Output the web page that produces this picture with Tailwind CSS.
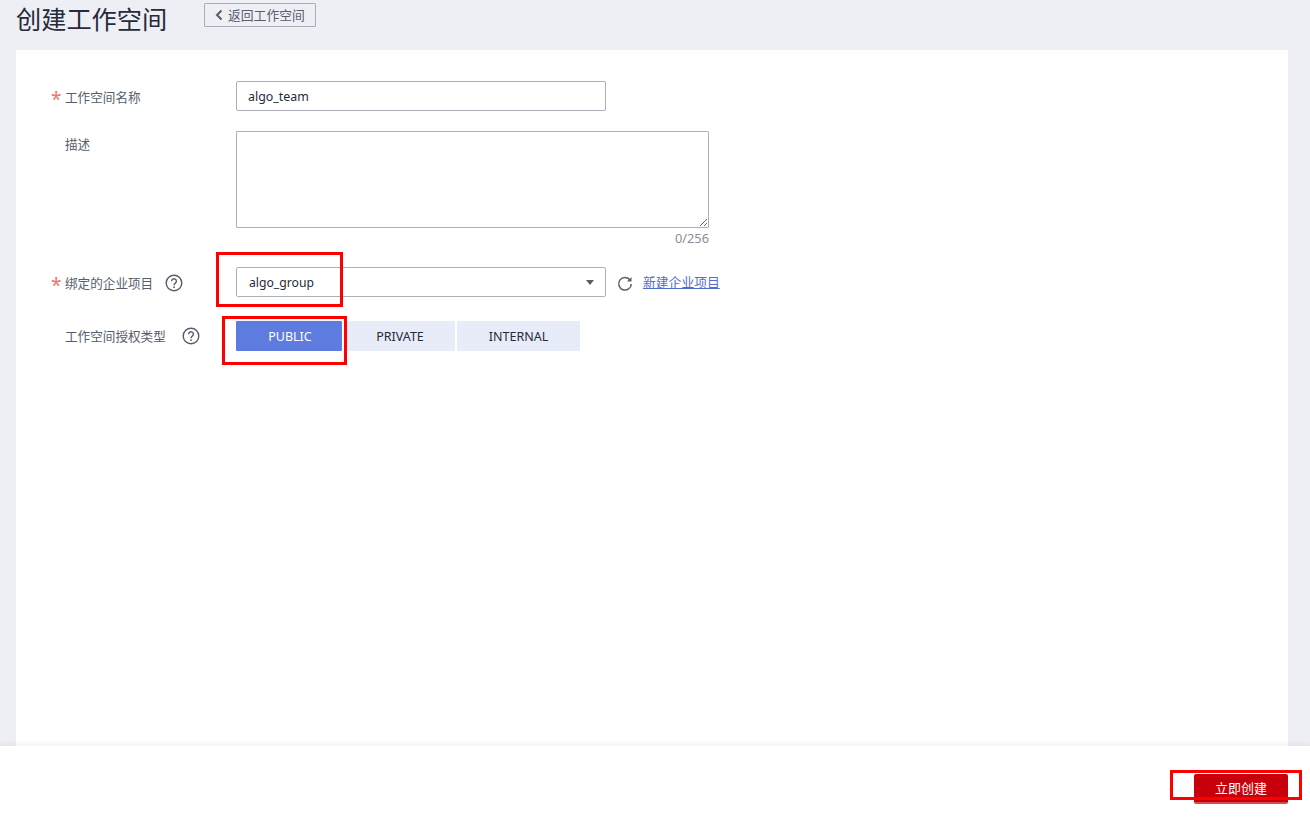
<!DOCTYPE html>
<html lang="zh">
<head>
<meta charset="utf-8">
<script src="https://cdn.jsdelivr.net/npm/@tailwindcss/browser@4"></script>
<title>创建工作空间</title>
</head>
<body class="relative w-[1310px] h-[818px] overflow-hidden bg-[#eeeff5] text-[#252b3a] font-['Noto_Sans','Noto_Sans_CJK_SC',sans-serif] text-[12.500px]">
  <div class="flex flex-col h-full">
    <header class="flex items-start h-[50px] pl-4 shrink-0">
      <h1 class="text-[25.200px] leading-[38px] font-normal w-[188px]">创建工作空间</h1>
      <button class="mt-[3px] flex items-center h-[24px] w-[112px] border border-[#a9adb8] pl-[10px] text-[#575d6c] rounded-[1px]">
        <svg width="8" height="12" viewBox="0 0 8 12" class="mr-[5px]"><path d="M6.500 1.500 2 6l4.500 4.500" fill="none" stroke="#575d6c" stroke-width="2"/></svg>
        <span class="text-[12.800px] pt-[1px]">返回工作空间</span>
      </button>
    </header>

    <main class="flex-1 mx-4 bg-white pl-[35px] pt-[31px] min-h-0 w-[1272px]">
      <div class="flex items-center h-[30px]">
        <label class="w-[185px] flex items-center text-[#575d6c] text-[12.600px]"><span class="w-[14px] text-[#f66f6a] text-[19px] leading-[20px] pt-[5px]">*</span><span class="pt-[4px]">工作空间名称</span></label>
        <input value="algo_team" class="w-[370px] h-[30px] border border-[#adb0b8] rounded-[2px] px-[11px] text-[12.400px] text-[#252b3a] outline-none">
      </div>
      <div class="flex items-start mt-[20px]">
        <label class="w-[185px] pl-[14px] pt-[5px] text-[#575d6c] text-[12.600px]">描述</label>
        <div class="w-[473px] flex flex-col">
          <textarea class="h-[97px] w-full border border-[#adb0b8] rounded-[1px] outline-none resize-y block"></textarea>
          <div class="text-right text-[12.800px] leading-[20px] text-[#8a8e99]">0/256</div>
        </div>
      </div>
      <div class="flex items-center h-[30px] mt-[19px]">
        <label class="w-[185px] flex items-center text-[#575d6c] text-[12.600px]">
          <span class="w-[14px] text-[#f66f6a] text-[19px] leading-[20px] pt-[5px]">*</span><span class="pt-[4px]">绑定的企业项目</span>
          <svg width="18" height="18" viewBox="0 0 18 18" class="ml-[12px] mt-[1px]"><circle cx="9" cy="9" r="7.800" fill="none" stroke="#575d6c" stroke-width="1.400"/><path d="M6.600 7.200a2.400 2.400 0 1 1 3.700 2c-.9.600-1.300 1-1.300 2" fill="none" stroke="#575d6c" stroke-width="1.400"/><circle cx="9" cy="13.200" r=".9" fill="#575d6c"/></svg>
        </label>
        <div class="relative w-[370px] h-[30px] border border-[#adb0b8] rounded-[2px] pl-[12px] pt-[2px] flex items-center text-[12.200px]">
          <span>algo_group</span>
          <span class="absolute right-[11px] top-[12px] w-0 h-0 border-l-[4px] border-r-[4px] border-t-[5px] border-l-transparent border-r-transparent border-t-[#575d6c]"></span>
        </div>
        <svg width="16" height="16" viewBox="0 0 16 16" class="ml-[11px] mt-[3px]"><path d="M13.200 4.200A6.300 6.300 0 1 0 14.300 8" fill="none" stroke="#575d6c" stroke-width="1.500"/><path d="M14.500 1v4.500H10z" fill="#575d6c"/></svg>
        <a class="ml-[10px] pt-[2px] text-[#526ecc] text-[12.800px] underline underline-offset-1">新建企业项目</a>
      </div>
      <div class="flex items-center h-[30px] mt-[24px]">
        <label class="w-[185px] pl-[14px] flex items-center text-[#575d6c] text-[12.600px]">
          <span class="pt-[2px]">工作空间授权类型</span>
          <svg width="18" height="18" viewBox="0 0 18 18" class="ml-[16px] mt-[1px]"><circle cx="9" cy="9" r="7.800" fill="none" stroke="#575d6c" stroke-width="1.400"/><path d="M6.600 7.200a2.400 2.400 0 1 1 3.700 2c-.9.600-1.300 1-1.300 2" fill="none" stroke="#575d6c" stroke-width="1.400"/><circle cx="9" cy="13.200" r=".9" fill="#575d6c"/></svg>
        </label>
        <div class="flex gap-[2px] h-[30px] text-[12.500px]">
          <button class="w-[106px] mr-[3px] pl-[2px] bg-[#5e7ce0] text-white rounded-[1px] pt-[2px]">PUBLIC</button>
          <button class="w-[108px] pr-[2px] bg-[#e8ecf8] text-[#252b3a] rounded-[1px] pt-[2px]">PRIVATE</button>
          <button class="w-[123px] bg-[#e8ecf8] text-[#252b3a] rounded-[1px] pt-[2px]">INTERNAL</button>
        </div>
      </div>
    </main>

    <footer class="h-[72px] shrink-0 bg-white shadow-[0_-2px_6px_rgba(0,0,0,0.06)] relative flex justify-end pr-[22px] pt-[28px]">
      <button class="w-[94px] h-[30px] bg-[#c7000b] border-b-2 border-[#d64a52] text-white text-[13px] rounded-[2px] pt-[1px]">立即创建</button>
    </footer>
  </div>

  <div class="absolute left-[216px] top-[252px] w-[127px] h-[55px] border-[3px] border-[#ff0000]"></div>
  <div class="absolute left-[222px] top-[316px] w-[125px] h-[49px] border-[3px] border-[#ff0000]"></div>
  <div class="absolute left-[1170px] top-[770px] w-[132px] h-[30px] border-[3px] border-[#ff0000]"></div>
</body>
</html>
